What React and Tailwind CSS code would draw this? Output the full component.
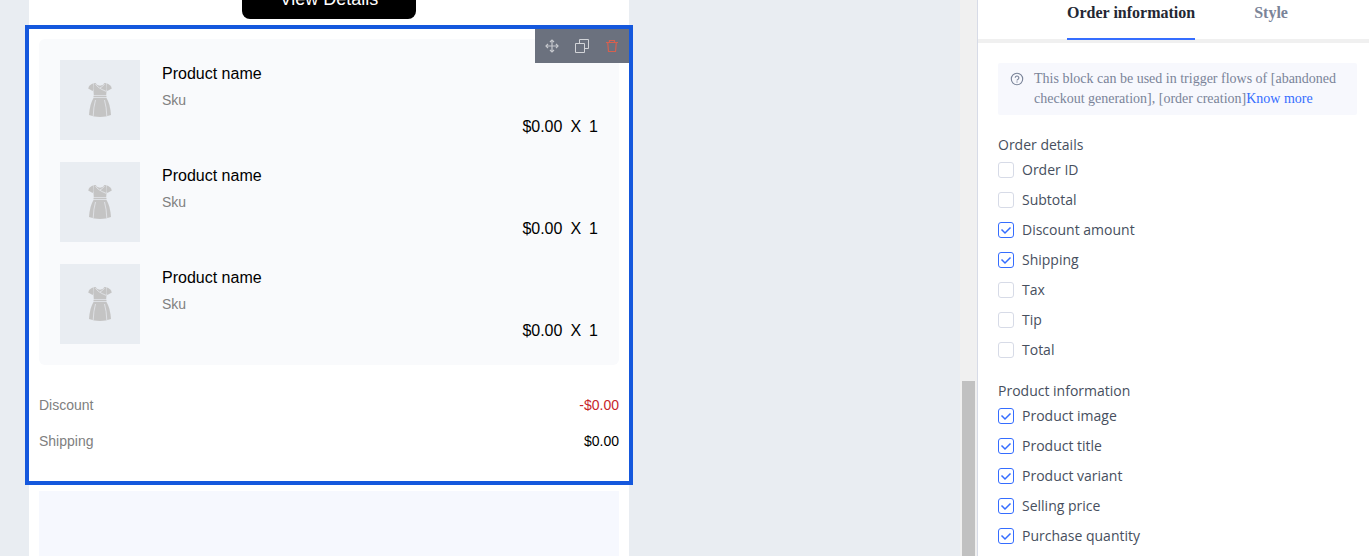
import { useState } from "react";

const products = [
  { id: 1, name: "Product name", sku: "Sku", price: "$0.00", quantity: 1 },
  { id: 2, name: "Product name", sku: "Sku", price: "$0.00", quantity: 1 },
  { id: 3, name: "Product name", sku: "Sku", price: "$0.00", quantity: 1 },
];

const optionGroups = [
  {
    title: "Order details",
    options: [
      { name: "orderId", label: "Order ID" },
      { name: "subtotal", label: "Subtotal" },
      { name: "discount", label: "Discount amount" },
      { name: "shipping", label: "Shipping" },
      { name: "tax", label: "Tax" },
      { name: "tip", label: "Tip" },
      { name: "total", label: "Total" },
    ],
  },
  {
    title: "Product information",
    options: [
      { name: "image", label: "Product image" },
      { name: "title", label: "Product title" },
      { name: "variant", label: "Product variant" },
      { name: "price", label: "Selling price" },
      { name: "quantity", label: "Purchase quantity" },
    ],
  },
];

const DressIcon = () => (
  <svg width="24" height="34" viewBox="0 0 24 34" fill="#c4c4c4">
    <path d="M5 .6Q1.500 1.500.2 5.500L4.600 8 5.500 6z" />
    <path d="M19 .6Q22.500 1.500 23.800 5.500L19.400 8 18.500 6z" />
    <path d="M5.500.3 7.500 0Q9 2.600 12 2.800 15 2.600 16.500 0l2 .3V8l-.3 4.300H5.800L5.500 8z" />
    <path d="M5.500 12.900h13v1.400h-13z" />
    <path d="M5.500 14.900h13Q22.300 21 23 32 18 34 12 34T1 32Q1.700 21 5.500 14.900z" />
    <path
      d="M7.500 1Q9.500 5 18 8.300M16.500 1Q14.500 4 12 5M7.500 17Q5.500 24 5.200 33M16.500 17Q18.500 24 18.800 33"
      fill="none"
      stroke="#e9edf2"
      strokeWidth="0.7"
    />
  </svg>
);

const MoveIcon = () => (
  <svg width="14" height="14" viewBox="0 0 14 14" fill="none" stroke="#c6c8cd">
    <path d="M7 1v12M1 7h12" strokeWidth="1.200" />
    <path d="M5 3l2-2 2 2M5 11l2 2 2-2M3 5 1 7l2 2M11 5l2 2-2 2" strokeWidth="1.200" />
  </svg>
);

const CopyIcon = () => (
  <svg width="14" height="14" viewBox="0 0 14 14" fill="none" stroke="#d2d4d8">
    <path d="M.5 4.500h9v9h-9zM4.500 4.500v-4h9v9h-4" />
  </svg>
);

const TrashIcon = () => (
  <svg width="14" height="14" viewBox="0 0 14 14" fill="none" stroke="#d5604f">
    <path d="M1 3.500h12M4.500 3.500v-2h5v2M2.700 3.500l.8 9h7l.8-9" strokeWidth="1.200" />
  </svg>
);

const HelpIcon = () => (
  <svg
    className="mt-[3px] shrink-0"
    width="14"
    height="14"
    viewBox="0 0 14 14"
    fill="none"
    stroke="#7a8499"
  >
    <circle cx="7" cy="7" r="5.700" strokeWidth="1.100" />
    <path d="M5.200 5.800a1.800 1.800 0 1 1 2.600 1.600Q7 7.800 7 8.600" strokeWidth="1.100" />
    <path d="M7 9.400v1.100" strokeWidth="1.200" />
  </svg>
);

const ProductRow = ({ product }) => (
  <div className="flex h-20 gap-[22px]">
    <div className="flex size-20 shrink-0 items-center justify-center bg-[#e9edf2]">
      <DressIcon />
    </div>
    <div className="flex-1 pt-px">
      <p className="text-base leading-[26px] text-black">{product.name}</p>
      <p className="text-sm leading-[26px] text-[#808080]">{product.sku}</p>
      <p className="flex justify-end gap-2 text-base leading-7 text-black">
        <span>{product.price}</span>
        <span>X</span>
        <span>{product.quantity}</span>
      </p>
    </div>
  </div>
);

const BlockToolbar = () => (
  <div className="absolute top-0 right-0 flex h-[34px] items-center gap-4 bg-[#6b717e] px-[10px]">
    <button type="button" aria-label="Move block">
      <MoveIcon />
    </button>
    <button type="button" aria-label="Copy block">
      <CopyIcon />
    </button>
    <button type="button" aria-label="Delete block">
      <TrashIcon />
    </button>
  </div>
);

const Checkbox = ({ name, label, checked, onChange }) => (
  <label className="flex h-[30px] items-center gap-2">
    <span className="grid size-4">
      <input
        type="checkbox"
        name={name}
        checked={checked}
        onChange={onChange}
        className="peer col-start-1 row-start-1 size-4 appearance-none rounded-[3px] border border-[#d7dbe7] bg-white checked:border-[#356dff]"
      />
      <svg
        className="pointer-events-none invisible col-start-1 row-start-1 peer-checked:visible"
        width="16"
        height="16"
        viewBox="0 0 16 16"
        fill="none"
        stroke="#356dff"
        strokeWidth="1.500"
      >
        <path d="M3.500 7.500 7 11l5.500-5.500" />
      </svg>
    </span>
    {label}
  </label>
);

const Canvas = () => (
  <main className="flex-1 overflow-hidden bg-[#e9edf2] pl-[29px] font-['Liberation_Sans',Arial,sans-serif]">
    <div className="flex min-h-full w-full max-w-[600px] flex-col bg-white">
      <div className="flex h-[29px] items-start justify-center">
        <button
          type="button"
          className="flex h-[19px] items-end rounded-b-lg bg-black px-[38px] pb-2 text-lg leading-6 text-white"
        >
          View Details
        </button>
      </div>

      <section className="relative p-[10px] pb-[22px] outline-4 outline-[#1558dd]">
        <div className="flex flex-col gap-[22px] rounded-md bg-[#f9fafc] p-[21px]">
          {products.map((product) => (
            <ProductRow key={product.id} product={product} />
          ))}
        </div>
        <dl className="mt-[22px] text-sm leading-9">
          <div className="flex justify-between">
            <dt className="text-[#808080]">Discount</dt>
            <dd className="text-[#c7252b]">-$0.00</dd>
          </div>
          <div className="flex justify-between">
            <dt className="text-[#808080]">Shipping</dt>
            <dd className="text-black">$0.00</dd>
          </div>
        </dl>
        <BlockToolbar />
      </section>

      <div className="flex flex-1 px-[10px] pt-[10px]">
        <div className="flex-1 bg-[#f6f8fe]" />
      </div>
    </div>
  </main>
);

const Settings = () => {
  const [tab, setTab] = useState("order");
  const [selected, setSelected] = useState([
    "discount",
    "shipping",
    "image",
    "title",
    "variant",
    "price",
    "quantity",
  ]);

  const toggle = (name) => {
    setSelected(
      selected.includes(name)
        ? selected.filter((item) => item !== name)
        : [...selected, name]
    );
  };

  const tabClass = (name) =>
    tab === name
      ? "h-10 border-b-2 border-[#356dff] pb-3 text-[#242833]"
      : "h-10 border-b-2 border-transparent pb-3 text-[#7a8499]";

  return (
    <aside className="w-[392px] shrink-0 overflow-hidden border-l border-[#d7dbe7] bg-white">
      <div className="flex h-[43px] justify-center gap-[59px] bg-linear-to-b from-white from-[39px] to-[#f0f0f0] to-[39px] pl-2 font-['Liberation_Serif',serif] text-base leading-6 font-bold">
        <button type="button" className={tabClass("order")} onClick={() => setTab("order")}>
          Order information
        </button>
        <button type="button" className={tabClass("style")} onClick={() => setTab("style")}>
          Style
        </button>
      </div>

      <div className="pt-5 pr-3 pl-5">
        <div className="flex gap-[10px] rounded-xs bg-[#f7f8fd] py-[6px] pr-4 pl-3 font-['Liberation_Serif',serif] text-sm leading-5 text-[#7a8499]">
          <HelpIcon />
          <p>
            This block can be used in trigger flows of [abandoned checkout
            generation], [order creation]
            <a href="#help" className="text-[#356dff]">
              Know more
            </a>
          </p>
        </div>

        <div className="mt-5 flex flex-col gap-4 font-['Open_Sans',sans-serif] text-sm leading-5 text-[#474f5e]">
          {optionGroups.map((group) => (
            <fieldset key={group.title}>
              <legend>{group.title}</legend>
              {group.options.map((option) => (
                <Checkbox
                  key={option.name}
                  name={option.name}
                  label={option.label}
                  checked={selected.includes(option.name)}
                  onChange={() => toggle(option.name)}
                />
              ))}
            </fieldset>
          ))}
        </div>
      </div>
    </aside>
  );
};

const App = () => {
  return (
    <div className="flex h-screen overflow-hidden">
      <Canvas />
      {/* Scroll track of the canvas */}
      <div className="flex w-[17px] shrink-0 flex-col bg-[#f0f0f0] px-[2px] pt-[381px]">
        <div className="flex-1 bg-[#c1c1c1]" />
      </div>
      <Settings />
    </div>
  );
};

export default App;
